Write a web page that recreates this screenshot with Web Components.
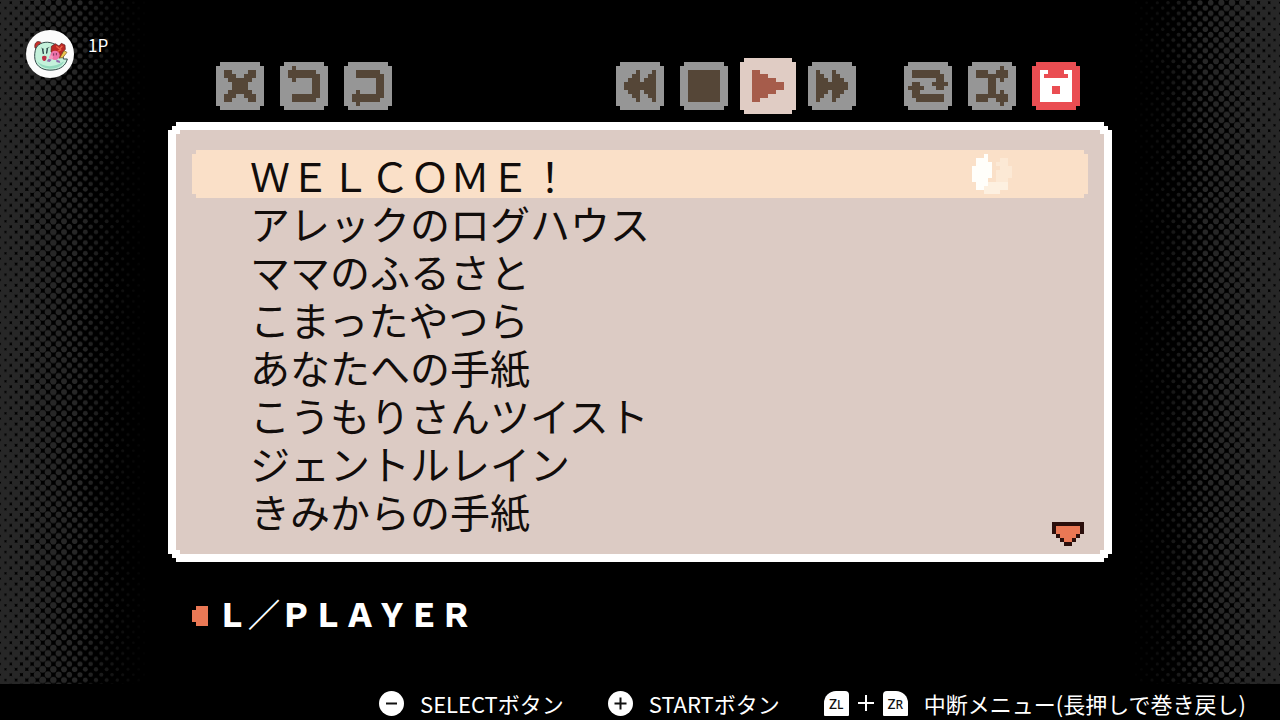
<!DOCTYPE html>
<html lang="ja">
<head>
<meta charset="UTF-8">
<meta name="viewport" content="width=device-width, initial-scale=1">
<title>PLAYER</title>
<style>
    body {
        margin: 0;
        background-color: #000;
        color: #fff;
        font-family: "Noto Sans CJK JP", "Noto Sans", sans-serif;
    }
</style>
</head>
<body>
<music-player></music-player>

<script>
const ICONS = {
    close: ['', '', '..##....##', '..###..###', '...######', '....####', '....####', '...######', '..###..###', '..##....##'],
    undo: ['', '...#', '..#######', '..########', '...#....##', '........##', '........##', '........##', '...#######', '...######'],
    redo: ['', '', '...######', '...#######', '........##', '........##', '........##', '...#....##', '..########', '..#######', '...#'],
    rewind: ['', '', '.....#...#', '....##..##', '...###.###', '..########', '..########', '...###.###', '....##..##', '.....#...#'],
    stop: ['', '', '..########', '..########', '..########', '..########', '..########', '..########', '..########', '..########'],
    play: ['', '', '', '...##', '...####', '...######', '...########', '...########', '...######', '...####', '...##'],
    forward: ['', '', '..#...#', '..##..##', '..###.###', '..########', '..########', '..###.###', '..##..##', '..#...#'],
    repeat: ['', '', '..#######', '..########', '........##', '..##...####', '.####...##', '..##', '..########', '...#######'],
    shuffle: ['', '........#', '..###..###', '..########', '.....##.#', '.....##', '.....##', '.....##.#', '..########', '..###..###', '........#'],
    save: ['', '', '..##....##', '..#......#', '..########', '..########', '..###..###', '..###..###', '..########', '..########'],
    down: ['kkkkkkkk', 'kooooook', 'kooooook', '.kooook', '..kook', '...kk'],
    left: ['.ooo', 'oooo', 'oooo', 'oooo', '.ooo'],
    disc: ['...w', '.www...ll', '.wwww.lll', 'wwwww..lll', 'wwwww.llll', 'wwwww.llll', 'wwww..lll', '.wwwmmmmm', '.wwmmmmmm', '...mmmm']
};

const COLORS = {
    '#': 'currentColor',
    k: '#2b0f0c',
    o: '#ea7855',
    w: '#fffefa',
    m: '#fdf0e0',
    l: '#fce9d5'
};

class PixelIcon extends HTMLElement {
    constructor() {
        super();
        this.attachShadow({ mode: 'open' });
    }

    connectedCallback() {
        const rows = ICONS[this.getAttribute('name')];
        const cols = Number(this.getAttribute('cols'));
        const lines = Number(this.getAttribute('rows')) || cols;
        let rects = '';
        rows.forEach((row, y) => {
            [...row].forEach((cell, x) => {
                if (cell !== '.') {
                    rects += `<rect x="${x}" y="${y}" width="1" height="1" fill="${COLORS[cell]}"/>`;
                }
            });
        });
        this.shadowRoot.innerHTML = `
            <style>
                :host { display: block; }
                svg { display: block; }
            </style>
            <svg width="${cols * 4}" height="${lines * 4}" viewBox="0 0 ${cols} ${lines}" shape-rendering="crispEdges" aria-hidden="true">${rects}</svg>
        `;
    }
}

class ToolButton extends HTMLElement {
    constructor() {
        super();
        this.attachShadow({ mode: 'open' });
    }

    connectedCallback() {
        const cols = this.hasAttribute('selected') ? 14 : 12;
        this.shadowRoot.innerHTML = `
            <style>
                :host {
                    display: block;
                    --face: #969696;
                    --ink: #554637;
                }

                :host([selected]) {
                    margin: 0 -4px;
                    --face: #e0ccc4;
                    --ink: #a65c4b;
                }

                :host([save]) {
                    --face: #ea4d52;
                    --ink: #fff;
                }

                button {
                    display: block;
                    padding: 0;
                    border: none;
                    background-color: var(--face);
                    color: var(--ink);
                    cursor: pointer;
                    clip-path: polygon(4px 0, calc(100% - 4px) 0, calc(100% - 4px) 4px, 100% 4px, 100% calc(100% - 4px), calc(100% - 4px) calc(100% - 4px), calc(100% - 4px) 100%, 4px 100%, 4px calc(100% - 4px), 0 calc(100% - 4px), 0 4px, 4px 4px);
                }
            </style>
            <button type="button" aria-label="${this.getAttribute('icon')}">
                <pixel-icon name="${this.getAttribute('icon')}" cols="${cols}"></pixel-icon>
            </button>
        `;
    }
}

class ToolBar extends HTMLElement {
    constructor() {
        super();
        this.attachShadow({ mode: 'open' });
        this.shadowRoot.innerHTML = `
            <style>
                :host {
                    display: flex;
                    gap: 48px;
                    padding: 0 32px 0 48px;
                }

                div {
                    display: flex;
                    align-items: center;
                    gap: 16px;
                }

                .edit {
                    margin-right: auto;
                }
            </style>
            <div class="edit">
                <tool-button icon="close"></tool-button>
                <tool-button icon="undo"></tool-button>
                <tool-button icon="redo"></tool-button>
            </div>
            <div>
                <tool-button icon="rewind"></tool-button>
                <tool-button icon="stop"></tool-button>
                <tool-button icon="play" selected></tool-button>
                <tool-button icon="forward"></tool-button>
            </div>
            <div>
                <tool-button icon="repeat"></tool-button>
                <tool-button icon="shuffle"></tool-button>
                <tool-button icon="save" save></tool-button>
            </div>
        `;
    }
}

class SongItem extends HTMLElement {
    constructor() {
        super();
        this.attachShadow({ mode: 'open' });
    }

    connectedCallback() {
        const playing = this.hasAttribute('playing');
        this.shadowRoot.innerHTML = `
            <style>
                :host {
                    display: block;
                }

                button {
                    display: flex;
                    align-items: center;
                    justify-content: space-between;
                    box-sizing: border-box;
                    width: 100%;
                    height: 48px;
                    padding: 0 76px 0 58px;
                    border: none;
                    background: none;
                    color: #120d0b;
                    font: 400 40px/40px "Liberation Sans", "Noto Sans CJK JP", sans-serif;
                    text-align: left;
                    white-space: nowrap;
                    cursor: pointer;
                }

                span {
                    padding-top: 8px;
                }

                :host([playing]) button {
                    background-color: #fae0c8;
                    clip-path: polygon(4px 0, calc(100% - 4px) 0, calc(100% - 4px) 4px, 100% 4px, 100% calc(100% - 4px), calc(100% - 4px) calc(100% - 4px), calc(100% - 4px) 100%, 4px 100%, 4px calc(100% - 4px), 0 calc(100% - 4px), 0 4px, 4px 4px);
                }
            </style>
            <button type="button"><span><slot></slot></span>${playing ? '<pixel-icon name="disc" cols="10"></pixel-icon>' : ''}</button>
        `;
    }
}

class SongPanel extends HTMLElement {
    constructor() {
        super();
        this.attachShadow({ mode: 'open' });
        this.shadowRoot.innerHTML = `
            <style>
                :host {
                    display: block;
                    padding: 8px;
                    background-color: #fff;
                    clip-path: polygon(8px 0, calc(100% - 8px) 0, calc(100% - 8px) 4px, calc(100% - 4px) 4px, calc(100% - 4px) 8px, 100% 8px, 100% calc(100% - 8px), calc(100% - 4px) calc(100% - 8px), calc(100% - 4px) calc(100% - 4px), calc(100% - 8px) calc(100% - 4px), calc(100% - 8px) 100%, 8px 100%, 8px calc(100% - 4px), 4px calc(100% - 4px), 4px calc(100% - 8px), 0 calc(100% - 8px), 0 8px, 4px 8px, 4px 4px, 8px 4px);
                }

                .list {
                    position: relative;
                    padding: 20px 16px;
                    background-color: #dccbc4;
                    clip-path: polygon(4px 0, calc(100% - 4px) 0, calc(100% - 4px) 4px, 100% 4px, 100% calc(100% - 4px), calc(100% - 4px) calc(100% - 4px), calc(100% - 4px) 100%, 4px 100%, 4px calc(100% - 4px), 0 calc(100% - 4px), 0 4px, 4px 4px);
                }

                /* lies over the last row */
                .more {
                    position: absolute;
                    right: 20px;
                    bottom: 8px;
                }
            </style>
            <div class="list">
                <slot></slot>
                <pixel-icon class="more" name="down" cols="8" rows="6"></pixel-icon>
            </div>
        `;
    }
}

class PlayerBadge extends HTMLElement {
    constructor() {
        super();
        this.attachShadow({ mode: 'open' });
        this.shadowRoot.innerHTML = `
            <style>
                :host {
                    display: flex;
                    align-items: flex-start;
                    gap: 14px;
                    font-size: 17px;
                    line-height: 30px;
                }

                svg {
                    display: block;
                }
            </style>
            <svg width="48" height="48" viewBox="0 0 144 144" aria-hidden="true">
                <circle cx="72" cy="72" r="72" fill="#fbfbfb"/>
                <path d="M27 54c-3-14 5-21 13-19 5 1 8 5 8 9L34 58z" fill="#c9302c" stroke="#4b1d1b" stroke-width="2"/>
                <path d="M30 54C38 39 60 32 80 40c22 8 33 28 32 47l12 0c-4 18-19 31-43 33-25 3-49-7-54-31-2-12-1-24 3-35z" fill="#c4f1db" stroke="#33494a" stroke-width="3"/>
                <path d="M34 94c15 17 48 22 80 0-8 18-26 23-44 22-17-1-29-8-36-22z" fill="#93d9bd"/>
                <path d="M50 58l2 12M64 56l-2 13" stroke="#263b42" stroke-width="4" stroke-linecap="round"/>
                <path d="M46 54l8 4M61 56l9-4" stroke="#33494a" stroke-width="2"/>
                <path d="M48 80c4-4 10-4 14 0-1 10-4 14-8 13-5-1-6-7-6-13z" fill="#c22f45"/>
                <path d="M76 49l12-8 11 7 7-8 11 5 1 13-9 10 4 9-13 7-15-8-10-10z" fill="#bd2825" stroke="#572020" stroke-width="2"/>
                <path d="M91 49l10 8 8-9M95 64l11-5" stroke="#ec6348" stroke-width="4" fill="none"/>
                <path d="M114 62l9 5-13 16-9 1z" fill="#efc750" stroke="#745323" stroke-width="2"/>
                <circle cx="87" cy="76" r="14" fill="#ee73a9"/>
                <circle cx="75" cy="82" r="6" fill="#f39ac0"/>
                <path d="M83 70v7M91 69v7" stroke="#76345d" stroke-width="3"/>
                <path d="M68 86l9 3-6 7-9-2zM91 89l10 3 2 7-12-3z" fill="#8e68ad"/>
            </svg>
            <span><slot></slot></span>
        `;
    }
}

class DotCurtain extends HTMLElement {
    constructor() {
        super();
        this.attachShadow({ mode: 'open' });
    }

    // Dots shrink and fade from the window edge inwards.
    connectedCallback() {
        const id = 'dots-' + this.getAttribute('side');
        let dots = '';
        for (let k = -1; k < 28; k++) {
            const x = k * 16;
            const r = x < 112 ? 13.5 - x * 0.025 : 10.7 - (x - 112) * 0.024;
            const opacity = Math.min(1, Math.max(0, (450 - x) / 210));
            const ys = k % 2 ? [8, 40, -24] : [24, -8, 56];
            ys.forEach(y => {
                dots += `<circle cx="${x}" cy="${y}" r="${r}" opacity="${opacity}"/>`;
            });
        }
        this.shadowRoot.innerHTML = `
            <style>
                :host {
                    position: absolute;
                    top: 0;
                    bottom: 36px;
                    left: 0;
                    width: 160px;
                    overflow: hidden;
                }

                :host([side="right"]) {
                    left: auto;
                    right: 0;
                    transform: scaleX(-1);
                }

                svg {
                    display: block;
                    width: 100%;
                    height: 100%;
                }
            </style>
            <svg aria-hidden="true">
                <defs>
                    <pattern id="${id}" width="480" height="32" patternUnits="userSpaceOnUse" patternTransform="scale(0.33333)">
                        <g fill="#272727">${dots}</g>
                    </pattern>
                </defs>
                <rect width="100%" height="100%" fill="url(#${id})"/>
            </svg>
        `;
    }
}

class KeyHint extends HTMLElement {
    constructor() {
        super();
        this.attachShadow({ mode: 'open' });
        this.shadowRoot.innerHTML = `
            <style>
                :host {
                    display: flex;
                    align-items: center;
                    gap: 16px;
                    white-space: nowrap;
                }

                .keys {
                    display: flex;
                    align-items: center;
                    gap: 9px;
                }
            </style>
            <span class="keys"><slot name="key"></slot></span>
            <span><slot></slot></span>
        `;
    }
}

class KeyCap extends HTMLElement {
    constructor() {
        super();
        this.attachShadow({ mode: 'open' });
        this.shadowRoot.innerHTML = `
            <style>
                :host {
                    display: block;
                    width: 25px;
                    height: 25px;
                    background-color: #fff;
                    color: #111;
                    font: 500 14px/26px "Noto Sans", sans-serif;
                    text-align: center;
                }

                :host([shape="round"]) {
                    border-radius: 50%;
                }

                :host([shape="zl"]) {
                    border-radius: 12px 4px 1px 1px;
                }

                :host([shape="zr"]) {
                    border-radius: 4px 12px 1px 1px;
                }

                ::slotted(small) {
                    font-size: 12px;
                }

                ::slotted(svg) {
                    display: block;
                }
            </style>
            <slot></slot>
        `;
    }
}

class HintBar extends HTMLElement {
    constructor() {
        super();
        this.attachShadow({ mode: 'open' });
        this.shadowRoot.innerHTML = `
            <style>
                :host {
                    display: flex;
                    justify-content: flex-end;
                    align-items: center;
                    gap: 44px;
                    height: 36px;
                    padding: 2px 34px 0 0;
                    box-sizing: border-box;
                    font-size: 22px;
                    line-height: 32px;
                }
            </style>
            <slot></slot>
        `;
    }
}

class MusicPlayer extends HTMLElement {
    constructor() {
        super();
        this.attachShadow({ mode: 'open' });
        this.shadowRoot.innerHTML = `
            <style>
                :host {
                    display: flex;
                    flex-direction: column;
                    position: relative;
                    min-height: 100vh;
                }

                main {
                    flex: 1;
                    position: relative;
                    display: flex;
                    flex-direction: column;
                    gap: 8px;
                    padding: 58px 168px 0;
                }

                player-badge {
                    position: absolute;
                    top: 30px;
                    left: 26px;
                }

                h1 {
                    display: flex;
                    align-items: center;
                    gap: 8px;
                    margin: 24px 0 0;
                    padding-left: 24px;
                    font: 900 32px/44px "Liberation Sans", "Noto Sans CJK JP", sans-serif;
                }
            </style>
            <dot-curtain side="left"></dot-curtain>
            <dot-curtain side="right"></dot-curtain>
            <main>
                <player-badge>1P</player-badge>
                <tool-bar></tool-bar>
                <song-panel>
                    <song-item playing>ＷＥＬＣＯＭＥ！</song-item>
                    <song-item>アレックのログハウス</song-item>
                    <song-item>ママのふるさと</song-item>
                    <song-item>こまったやつら</song-item>
                    <song-item>あなたへの手紙</song-item>
                    <song-item>こうもりさんツイスト</song-item>
                    <song-item>ジェントルレイン</song-item>
                    <song-item>きみからの手紙</song-item>
                </song-panel>
                <h1><pixel-icon name="left" cols="4" rows="5"></pixel-icon><span>Ｌ／ＰＬＡＹＥＲ</span></h1>
            </main>
            <hint-bar>
                <key-hint>
                    <key-cap slot="key" shape="round"><svg width="25" height="25" viewBox="0 0 25 25" aria-hidden="true"><path d="M7 12.5h11" stroke="#111" stroke-width="2"/></svg></key-cap>
                    SELECTボタン
                </key-hint>
                <key-hint>
                    <key-cap slot="key" shape="round"><svg width="25" height="25" viewBox="0 0 25 25" aria-hidden="true"><path d="M6.5 12.5h12M12.5 6.5v12" stroke="#111" stroke-width="2"/></svg></key-cap>
                    STARTボタン
                </key-hint>
                <key-hint>
                    <key-cap slot="key" shape="zl">Z<small>L</small></key-cap>
                    <svg slot="key" width="16" height="16" viewBox="0 0 16 16" aria-hidden="true"><path d="M0 8h16M8 0v16" stroke="#fff" stroke-width="2"/></svg>
                    <key-cap slot="key" shape="zr">Z<small>R</small></key-cap>
                    中断メニュー(長押しで巻き戻し)
                </key-hint>
            </hint-bar>
        `;
    }
}

customElements.define('pixel-icon', PixelIcon);
customElements.define('tool-button', ToolButton);
customElements.define('tool-bar', ToolBar);
customElements.define('song-item', SongItem);
customElements.define('song-panel', SongPanel);
customElements.define('player-badge', PlayerBadge);
customElements.define('dot-curtain', DotCurtain);
customElements.define('key-hint', KeyHint);
customElements.define('key-cap', KeyCap);
customElements.define('hint-bar', HintBar);
customElements.define('music-player', MusicPlayer);
</script>
</body>
</html>
